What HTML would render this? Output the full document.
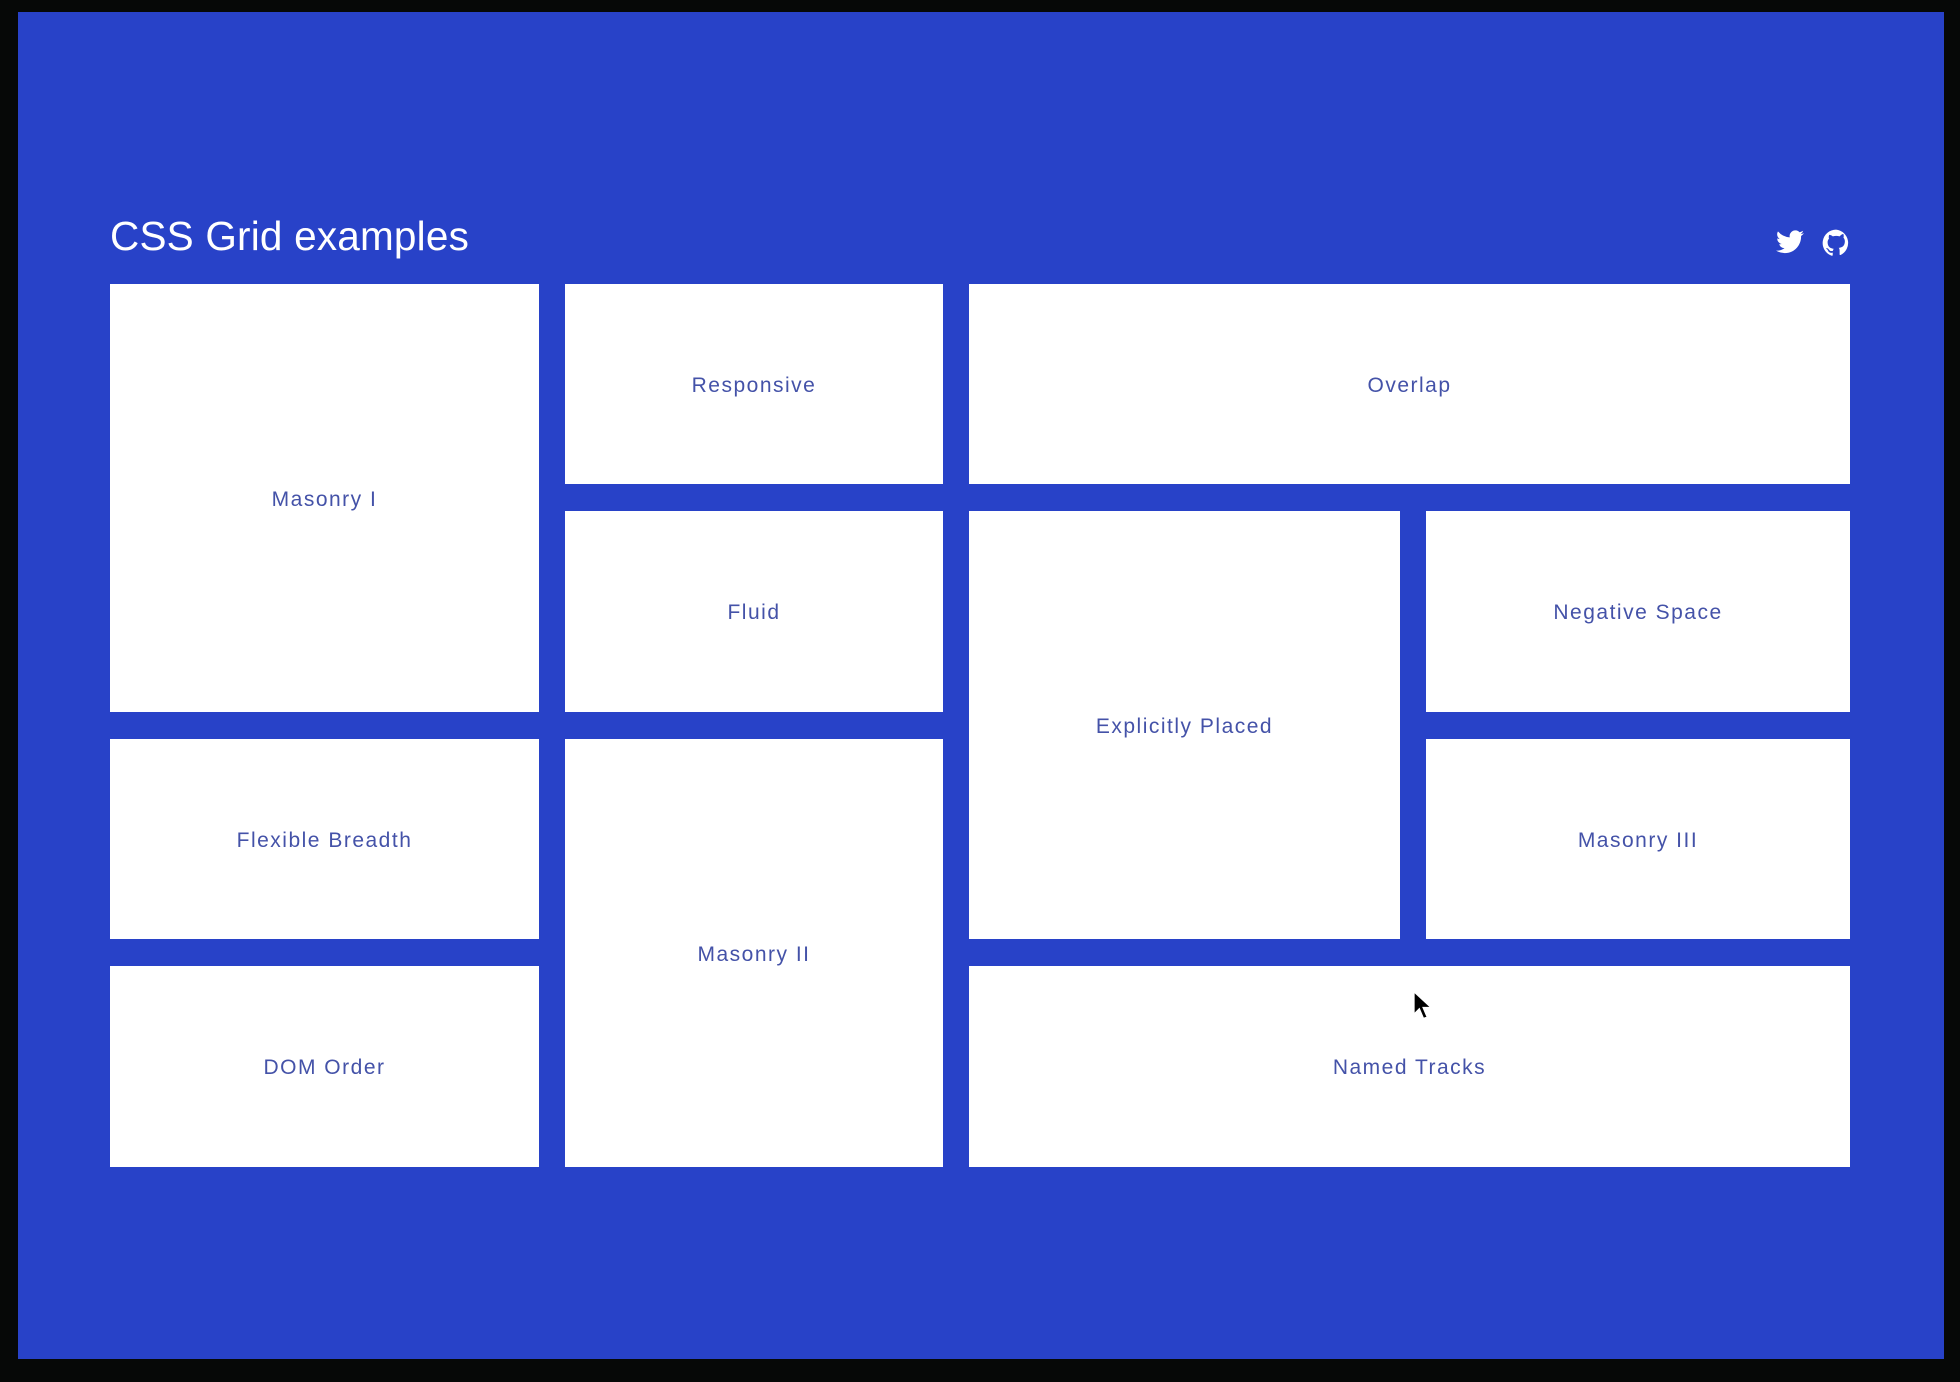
<!DOCTYPE html>
<html><head><style>
html,body{margin:0;padding:0;background:#060807;width:1960px;height:1382px;overflow:hidden;font-family:"Liberation Sans",sans-serif}
#blue{position:absolute;left:18px;top:12px;width:1926px;height:1347px;background:#2842c8}
h1{position:absolute;left:110px;top:213px;margin:0;color:#fff;font-weight:400;font-size:40.5px;letter-spacing:0.2px}
.c{position:absolute;background:#fff;display:flex;align-items:center;justify-content:center;color:#4452a8;font-size:21px;letter-spacing:1.5px;box-sizing:border-box;padding-top:3px}
svg{position:absolute}
</style></head><body>
<div id="blue"></div>
<h1>CSS Grid examples</h1>
<svg style="left:1776px;top:230px" width="28" height="24" viewBox="0 0 24 20"><path fill="#fff" d="M24 2.4a10 10 0 0 1-2.8.8A5 5 0 0 0 23.3.4a10 10 0 0 1-3.1 1.2A4.9 4.9 0 0 0 11.8 6 14 14 0 0 1 1.7.9a4.9 4.9 0 0 0 1.5 6.600A4.900 4.900 0 0 1 1 6.900a4.900 4.900 0 0 0 3.900 4.800 4.900 4.900 0 0 1-2.200.100 4.900 4.900 0 0 0 4.600 3.400A9.900 9.900 0 0 1 0 17.300 14 14 0 0 0 7.500 19.500c9.100 0 14-7.500 14-14v-.600A10 10 0 0 0 24 2.400z"/></svg>
<svg style="left:1822px;top:229px" width="28" height="28" viewBox="0 0 24 24"><path fill="#fff" d="M12 .5a11.5 11.5 0 0 0-3.6 22.4c.6.1.8-.3.8-.6v-2c-3.2.7-3.9-1.5-3.9-1.5-.5-1.3-1.3-1.7-1.3-1.7-1-.7.1-.7.1-.7 1.2.1 1.8 1.2 1.8 1.2 1 1.8 2.8 1.3 3.5 1 .1-.8.4-1.3.7-1.6-2.6-.3-5.300-1.300-5.300-5.700 0-1.300.500-2.300 1.200-3.100-.100-.300-.500-1.500.100-3.100 0 0 1-.300 3.200 1.200a11 11 0 0 1 5.800 0C17.300 4 18.300 4.300 18.300 4.300c.600 1.600.200 2.800.100 3.100.700.800 1.200 1.900 1.200 3.100 0 4.400-2.700 5.400-5.300 5.700.400.400.800 1.100.800 2.200v3.300c0 .300.200.700.800.600A11.500 11.500 0 0 0 12 .500z"/></svg>
<div class="c" style="left:110px;top:284px;width:429px;height:428px">Masonry I</div>
<div class="c" style="left:565px;top:284px;width:378px;height:200px">Responsive</div>
<div class="c" style="left:969px;top:284px;width:881px;height:200px">Overlap</div>
<div class="c" style="left:565px;top:511px;width:378px;height:201px">Fluid</div>
<div class="c" style="left:969px;top:511px;width:431px;height:428px">Explicitly Placed</div>
<div class="c" style="left:1426px;top:511px;width:424px;height:201px">Negative Space</div>
<div class="c" style="left:110px;top:739px;width:429px;height:200px">Flexible Breadth</div>
<div class="c" style="left:565px;top:739px;width:378px;height:428px">Masonry II</div>
<div class="c" style="left:1426px;top:739px;width:424px;height:200px">Masonry III</div>
<div class="c" style="left:110px;top:966px;width:429px;height:201px">DOM Order</div>
<div class="c" style="left:969px;top:966px;width:881px;height:201px">Named Tracks</div>
<svg style="left:1412px;top:990px" width="20" height="30" viewBox="0 0 14 22"><path d="M1 1v17l4-4 3 7 3-1-3-7h6z" fill="#000" stroke="#fff" stroke-width="1.2"/></svg>
</body></html>
